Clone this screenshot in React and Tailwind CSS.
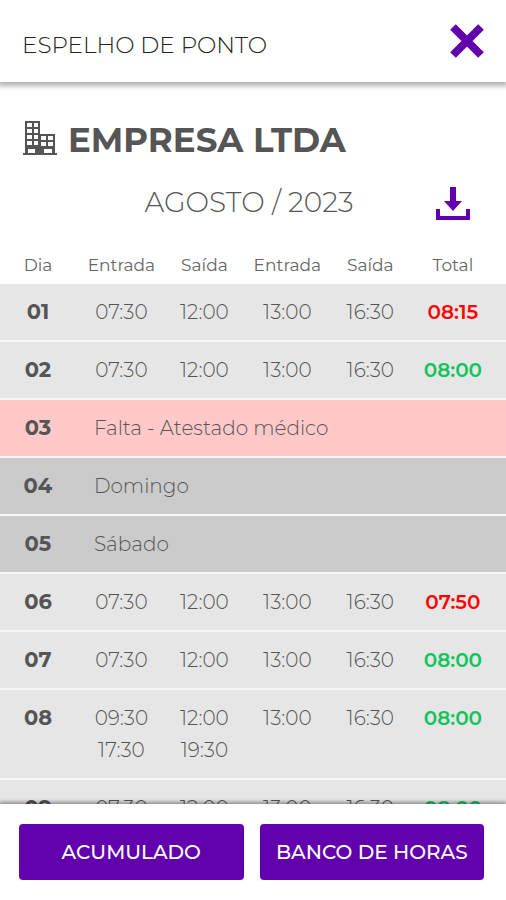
import React from "react";

const days = [
  { day: "01", times: [["07:30"], ["12:00"], ["13:00"], ["16:30"]], total: "08:15", ok: false },
  { day: "02", times: [["07:30"], ["12:00"], ["13:00"], ["16:30"]], total: "08:00", ok: true },
  { day: "03", note: "Falta - Atestado médico", absence: true },
  { day: "04", note: "Domingo" },
  { day: "05", note: "Sábado" },
  { day: "06", times: [["07:30"], ["12:00"], ["13:00"], ["16:30"]], total: "07:50", ok: false },
  { day: "07", times: [["07:30"], ["12:00"], ["13:00"], ["16:30"]], total: "08:00", ok: true },
  { day: "08", times: [["09:30", "17:30"], ["12:00", "19:30"], ["13:00"], ["16:30"]], total: "08:00", ok: true },
  { day: "09", times: [["07:30"], ["12:00"], ["13:00"], ["16:30"]], total: "08:00", ok: true },
];

function CloseIcon() {
  return (
    <svg viewBox="0 0 34 34" className="size-[34px]" fill="none" stroke="#6200ae" strokeWidth="8" aria-hidden="true">
      <path d="M3 3 31 31M31 3 3 31" />
    </svg>
  );
}

function DownloadIcon() {
  return (
    <svg viewBox="0 0 34 34" className="size-[34px]" fill="#6200ae" aria-hidden="true">
      <path d="M14 0h6v14h6l-9 10-9-10h6z" />
      <path d="M0 22h4v7h26v-7h4v11H0z" />
    </svg>
  );
}

function BuildingIcon() {
  return (
    <svg viewBox="0 0 34 34" className="size-[34px] shrink-0" fill="#555555" aria-hidden="true">
      <path
        fillRule="evenodd"
        d="M2 0h15v13h15v19h2v2H0v-2h2zM4 2v4h5V2zM11 2v4h4V2zM4 8v4h5V8zM11 8v4h4V8zM4 14v4h5v-4zM11 14v4h4v-4zM4 20v4h5v-4zM11 20v4h4v-4zM18 15v4h5v-4zM25 15v4h5v-4zM18 21v4h5v-4zM25 21v4h5v-4zM5 28v4h7v-4zM21 28v4h8v-4z"
      />
    </svg>
  );
}

function DayRow({ entry }) {
  const rowColor = entry.absence ? "bg-[#ffc9c9]" : entry.note ? "bg-[#cbcbcb]" : "bg-[#e6e6e6]";
  return (
    <tr className={`border-b-2 border-[#f7f7f7] align-top ${rowColor}`}>
      <th scope="row" className="py-3 pr-1 text-[21px] leading-8 font-bold text-[#555555]">
        {entry.day}
      </th>
      {entry.note ? (
        <td colSpan={5} className="py-3 pl-[14px] text-left text-xl leading-8">
          {entry.note}
        </td>
      ) : (
        <>
          {entry.times.map((stamps, i) => (
            <td key={i} className="py-3 text-xl leading-8">
              {stamps.map((stamp) => (
                <div key={stamp}>{stamp}</div>
              ))}
            </td>
          ))}
          <td
            className={`py-3 pr-3 text-xl leading-8 font-semibold ${entry.ok ? "text-[#10c45c]" : "text-[#fa0505]"}`}
          >
            {entry.total}
          </td>
        </>
      )}
    </tr>
  );
}

export default function App() {
  return (
    <div className="flex h-screen flex-col overflow-hidden bg-white font-[Montserrat,Inter,sans-serif] text-[#555555]">
      <header className="z-10 flex h-[82px] shrink-0 items-center justify-between pr-[22px] pl-[22px] shadow-[0_2px_5px_2px_rgba(0,0,0,0.3)]">
        <h1 className="pt-2 text-[23px] leading-8 font-light text-[#222222]">ESPELHO DE PONTO</h1>
        <button type="button" aria-label="Fechar">
          <CloseIcon />
        </button>
      </header>

      <main className="min-h-0 flex-1 overflow-hidden">
        <div className="flex items-center gap-[11px] pt-[34px] pl-[23px]">
          <BuildingIcon />
          <h2 className="pt-1 text-[34px] leading-10 font-bold text-[#555555]">EMPRESA LTDA</h2>
        </div>
        <div className="grid grid-cols-[1fr_auto_1fr] items-center pt-[22px] pr-9">
          <span />
          <p className="pl-7 text-[28px] leading-10 font-light">AGOSTO / 2023</p>
          <button type="button" aria-label="Baixar" className="justify-self-end pt-1">
            <DownloadIcon />
          </button>
        </div>

        <table className="mt-5 w-full table-fixed border-collapse text-center font-light">
          <colgroup>
            <col className="w-[15.8%]" />
            <col className="w-[16.4%]" />
            <col className="w-[16.4%]" />
            <col className="w-[16.4%]" />
            <col className="w-[16.4%]" />
            <col />
          </colgroup>
          <thead>
            <tr className="h-[42px] text-[17px] leading-6 text-[#666666]">
              <th scope="col" className="pt-1 pr-1 font-normal">Dia</th>
              <th scope="col" className="pt-1 font-normal">Entrada</th>
              <th scope="col" className="pt-1 font-normal">Saída</th>
              <th scope="col" className="pt-1 font-normal">Entrada</th>
              <th scope="col" className="pt-1 font-normal">Saída</th>
              <th scope="col" className="pt-1 pr-3 font-normal">Total</th>
            </tr>
          </thead>
          <tbody>
            {days.map((entry) => (
              <DayRow key={entry.day} entry={entry} />
            ))}
          </tbody>
        </table>
      </main>

      <footer className="z-10 flex shrink-0 gap-4 bg-white py-5 pr-[22px] pl-[19px] shadow-[0_-1px_4px_1px_rgba(0,0,0,0.4)]">
        <button type="button" className="h-14 flex-1 rounded bg-[#6200ae] text-xl font-medium text-white">
          ACUMULADO
        </button>
        <button type="button" className="h-14 flex-1 rounded bg-[#6200ae] text-xl font-medium text-white">
          BANCO DE HORAS
        </button>
      </footer>
    </div>
  );
}
